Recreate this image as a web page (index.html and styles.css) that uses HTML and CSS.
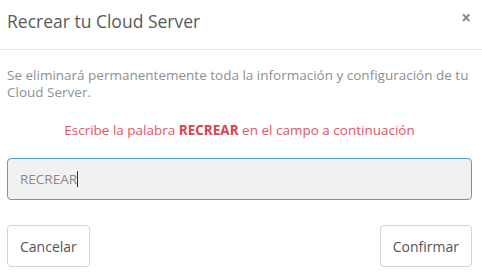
FILE: index.html
```html
<!DOCTYPE html>
<html lang="es">
<head>
<meta charset="utf-8">
<link rel="stylesheet" href="styles.css">
</head>
<body>
<div class="modal">
  <div class="modal-header">
    <h4 class="modal-title">Recrear tu Cloud Server</h4>
    <button class="close" type="button" aria-label="Cerrar">×</button>
  </div>
  <div class="modal-body">
    <p class="info">Se eliminará permanentemente toda la información y configuración de tu Cloud Server.</p>
    <p class="warn">Escribe la palabra <strong>RECREAR</strong> en el campo a continuación</p>
    <div class="field"><span class="value">RECREAR</span><span class="caret"></span></div>
  </div>
  <div class="modal-footer">
    <button class="btn" type="button">Cancelar</button>
    <button class="btn" type="button">Confirmar</button>
  </div>
</div>
</body>
</html>
```
FILE: styles.css
```css
* { box-sizing: border-box; }
html, body { margin: 0; background: #fff; }
body { font-family: "Open Sans", "Liberation Sans", sans-serif; color: #555; }
.modal { width: 482px; height: 277px; background: #fff; }
.modal-header {
  display: flex; align-items: flex-start; justify-content: space-between;
  height: 50px; padding: 9px 11px 0 7px;
  border-bottom: 1px solid #e5e5e5;
}
.modal-title { margin: 0; font-size: 17.5px; font-weight: 400; line-height: 24px; color: #5a5a5a; }
.close {
  border: 0; background: none; padding: 0; margin-top: -1px;
  font-family: "Open Sans", sans-serif; font-size: 17px; font-weight: 700; line-height: 20px;
  color: #888; cursor: pointer;
}
.modal-body { padding: 17px 10px 0 7px; }
.info { margin: 0; font-size: 13.5px; line-height: 17px; color: #8f8f8f; }
.warn { margin: 20px 0 0; text-align: center; font-size: 13.5px; line-height: 18px; color: #e8535f; }
.warn strong { font-weight: 700; color: #e0404f; }
.field {
  display: flex; align-items: center;
  margin-top: 19px; height: 42px; padding: 0 12px;
  background: #f1f1f1; border: 1px solid #4a9fdc; border-radius: 4px;
  font-size: 13.5px; color: #8a8a8a;
}
.caret { display: inline-block; width: 1px; height: 16px; background: #333; }
.modal-footer {
  display: flex; justify-content: space-between;
  padding: 25px 10px 0 7px;
}
.btn {
  height: 42px; padding: 0 12px;
  background: #fff; border: 1px solid #d4d4d4; border-radius: 4px;
  font-family: "Open Sans", "Liberation Sans", sans-serif; font-size: 14px; color: #555;
}
```
